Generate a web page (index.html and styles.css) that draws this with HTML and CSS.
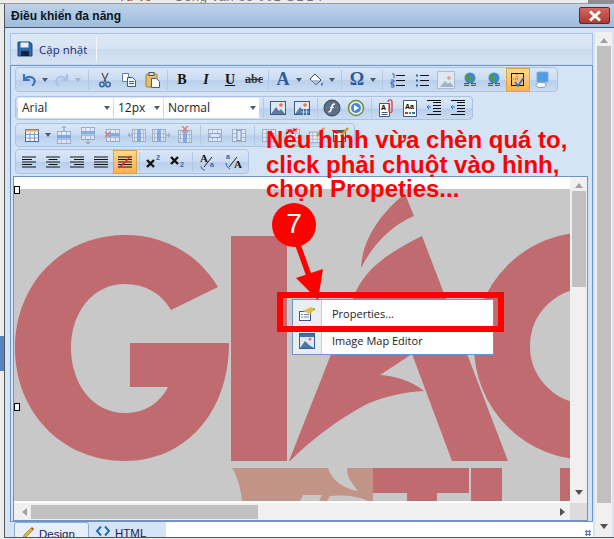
FILE: index.html
```html
<!DOCTYPE html>
<html lang="vi">
<head>
    <meta charset="UTF-8">
    <title>Điều khiển đa năng</title>
    <link rel="stylesheet" href="styles.css">
</head>
<body>
<svg class="defs" width="0" height="0">
    <symbol id="tbl" viewBox="0 0 16 16"><rect x="1.500" y="2.500" width="13" height="12" fill="#e6edf6" stroke="#8d9db5"/><path d="M1.500 6.500h13M1.500 10.500h13M5.500 2.500v12M10.500 2.500v12" stroke="#a7b3c6" fill="none"/></symbol>
    <symbol id="tblr" viewBox="0 0 16 16"><rect x="1.500" y="2.500" width="13" height="12" fill="#e6edf6" stroke="#8d9db5"/><path d="M1.500 10.500h13M5.500 2.500v12M10.500 2.500v12" stroke="#a7b3c6" fill="none"/><rect x="1" y="6" width="14" height="3.500" fill="#6f9cdc"/></symbol>
    <symbol id="tblc" viewBox="0 0 16 16"><rect x="1.500" y="2.500" width="13" height="12" fill="#e6edf6" stroke="#8d9db5"/><path d="M1.500 6.500h13M1.500 10.500h13M3.500 2.500v12M12.500 2.500v12" stroke="#a7b3c6" fill="none"/><rect x="6" y="2" width="4" height="13" fill="#6f9cdc"/></symbol>
    <symbol id="lines-l" viewBox="0 0 16 16"><path d="M1 3h14M1 5.500h10M1 8h14M1 10.500h10M1 13h14" stroke="#111" stroke-width="1.200" fill="none"/></symbol>
    <symbol id="lines-c" viewBox="0 0 16 16"><path d="M1 3h14M3.500 5.500h9M1 8h14M3.500 10.500h9M1 13h14" stroke="#111" stroke-width="1.200" fill="none"/></symbol>
    <symbol id="lines-r" viewBox="0 0 16 16"><path d="M1 3h14M5 5.500h10M1 8h14M5 10.500h10M1 13h14" stroke="#111" stroke-width="1.200" fill="none"/></symbol>
    <symbol id="lines-j" viewBox="0 0 16 16"><path d="M1 3h14M1 5.500h14M1 8h14M1 10.500h14M1 13h14" stroke="#111" stroke-width="1.200" fill="none"/></symbol>
    <symbol id="pic" viewBox="0 0 16 16"><rect x=".5" y="1.500" width="15" height="13" fill="#dfe8f3" stroke="#3f5a80"/><circle cx="11" cy="5" r="1.800" fill="#e8763a"/><path d="M1 14l5-7 3 4 2-2 4 5z" fill="#5b7ba3"/></symbol>
    <symbol id="globe" viewBox="0 0 16 16"><circle cx="8" cy="6" r="5.500" fill="#3f88d0"/><path d="M5 2l3 1-1 3 3 1-1 3-3-2-3-2z" fill="#4f9e3a"/><path d="M2 12.500h5M9 12.500h5" stroke="#333" stroke-width="2.400" fill="none"/><path d="M2 12.500h5M9 12.500h5" stroke="#ddd" stroke-width=".8" fill="none"/></symbol>
    <symbol id="indent" viewBox="0 0 16 16"><path d="M7 2.500h8M7 5.500h8M7 8.500h8M7 11.500h8M1 14.500h14M1 .5h14" stroke="#111" fill="none"/><path d="M1 7h4M3 5l-2 2 2 2" stroke="#2c6fc4" fill="none"/></symbol>
</svg>

<div class="page">
    <div class="behind-top"><span class="behind-red">Tư vc</span><span class="behind-grey">Công văn số 001 GDĐT</span></div>
    <div class="behind-corner"></div>
    <div class="behind-blue"></div>

    <div class="window">
        <div class="titlebar">
            <span class="title">Điều khiển đa năng</span>
            <div class="close"><svg width="16" height="12" viewBox="0 0 16 12"><path d="M3 1.500l10 9M13 1.500l-10 9" stroke="#fff" stroke-width="3"/></svg></div>
        </div>

        <div class="winbody">
            <div class="content">
                <div class="mainbar">
                    <div class="savebtn">
                        <svg width="16" height="16" viewBox="0 0 16 16"><path d="M1 1h12l2 2v12H1z" fill="#2f68ad" stroke="#1c4a84"/><rect x="3.500" y="1.500" width="8" height="5" fill="#e8eef6"/><rect x="4" y="10" width="8" height="5" fill="#10233f"/></svg>
                        <span>Cập nhật</span>
                    </div>
                    <div class="mainsep"></div>
                </div>

                <div class="frame">
                    <div class="toolbar tb1">
                        <div class="btn"><svg width="16" height="16" viewBox="0 0 16 16"><path d="M3 2v6h6M3.500 7.500C6 4 11 4 13 7c1.300 2 .5 5-2 6.500" stroke="#3b74bb" stroke-width="2.200" fill="none"/></svg></div><div class="caret"></div>
                        <div class="btn"><svg width="16" height="16" viewBox="0 0 16 16"><path d="M13 2v6H7M12.500 7.500C10 4 5 4 3 7c-1.300 2-.5 5 2 6.500" stroke="#a9c3e2" stroke-width="2.200" fill="none"/></svg></div><div class="caret faded"></div>
                        <div class="sep wide"></div>
                        <div class="btn"><svg width="16" height="16" viewBox="0 0 16 16"><path d="M5 1l4 9M11 1L7 10" stroke="#555" stroke-width="1.300"/><circle cx="5" cy="12.500" r="2.200" fill="none" stroke="#2f62b0" stroke-width="1.500"/><circle cx="11" cy="12.500" r="2.200" fill="none" stroke="#2f62b0" stroke-width="1.500"/></svg></div>
                        <div class="btn"><svg width="16" height="16" viewBox="0 0 16 16"><path d="M1.500 1.500h6v8h-6z" fill="#fff" stroke="#5f7ea6"/><path d="M6.500 5.500h5l3 3v6h-8z" fill="#f6f9fd" stroke="#2f5f9e"/><path d="M8 9.500h5M8 11.500h5" stroke="#2f5f9e"/></svg></div>
                        <div class="btn"><svg width="16" height="16" viewBox="0 0 16 16"><rect x="1" y="2" width="11" height="13" rx="1" fill="#e7bd6c" stroke="#a87f32"/><rect x="4" y="0.500" width="5" height="3" fill="#ddd" stroke="#555"/><path d="M6.500 6.500h5l3 3v6h-8z" fill="#fff" stroke="#4b5d78"/></svg></div>
                        <div class="sep small"></div>
                        <div class="btn bold-b">B</div>
                        <div class="btn ital-i">I</div>
                        <div class="btn under-u">U</div>
                        <div class="btn strike">abc</div>
                        <div class="sep small"></div>
                        <div class="btn big-a">A</div><div class="caret"></div>
                        <div class="btn"><svg width="16" height="16" viewBox="0 0 16 16"><path d="M7 2l6 6-5 5-6-6z" fill="#fff" stroke="#444"/><path d="M3 8h9l-4 5z" fill="#a7bddb"/><path d="M14 10c1 2 1.500 3 0 4-1.500-1-1-2 0-4z" fill="#3b74bb"/></svg></div><div class="caret"></div>
                        <div class="sep"></div>
                        <div class="btn omega">Ω</div><div class="caret"></div>
                        <div class="sep"></div>
                        <div class="btn"><svg width="16" height="16" viewBox="0 0 16 16"><path d="M6 3.500h9M6 8.500h9M6 13.500h9" stroke="#111" fill="none"/><path d="M2 2h2v4M1 8h3v2H1v2h3M1 13h3v2H1" stroke="#2f62b0" fill="none"/></svg></div>
                        <div class="btn"><svg width="16" height="16" viewBox="0 0 16 16"><path d="M6 3.500h9M6 8.500h9M6 13.500h9" stroke="#111" fill="none"/><path d="M2 2.500h2v2H2zM2 7.500h2v2H2zM2 12.500h2v2H2z" fill="#2f62b0"/></svg></div>
                        <div class="btn"><svg width="18" height="18" viewBox="0 0 18 18"><rect x=".5" y=".5" width="17" height="17" fill="#dfe7f1" stroke="#8897ad" stroke-dasharray="1 1"/><circle cx="12" cy="7" r="1.800" fill="#e59a7c"/><path d="M3 16l5-6 3 3 2-2 4 5z" fill="#9fb2ca"/></svg></div>
                        <div class="btn"><svg width="16" height="16"><use href="#globe"/></svg></div>
                        <div class="btn"><svg width="16" height="16"><use href="#globe"/></svg></div>
                        <div class="btn on"><svg width="18" height="18" viewBox="0 0 18 18"><rect x="2.500" y="2.500" width="12" height="12" fill="none" stroke="#111"/><path d="M2 8h8M8 3v6" stroke="#c0503a" stroke-dasharray="1 1"/><path d="M6 11l3 4 6-9" stroke="#2f74c9" stroke-width="1.600" fill="none"/></svg></div>
                        <div class="btn"><svg width="16" height="18" viewBox="0 0 16 18"><rect x="3" y="1" width="11" height="10" rx="1" fill="#4e9be6" stroke="#8fa8c8"/><ellipse cx="7" cy="14" rx="5" ry="2.500" fill="#f5f7fa" stroke="#8d9db5"/></svg></div>
                    </div>

                    <div class="toolbar tb2">
                        <div class="select sel-font">Arial</div>
                        <div class="select sel-size">12px</div>
                        <div class="select sel-style">Normal</div>
                        <div class="sep"></div>
                        <div class="btn"><svg width="16" height="16"><use href="#pic"/></svg></div>
                        <div class="btn"><svg width="16" height="16" viewBox="0 0 16 16"><use href="#pic"/><path d="M7 9h8v6H7z" fill="#3f70ad"/><path d="M9.500 9v6M12.500 9v6M7 12h8" stroke="#fff" stroke-width=".6"/></svg></div>
                        <div class="sep"></div>
                        <div class="btn"><svg width="18" height="18" viewBox="0 0 18 18"><circle cx="9" cy="9" r="8" fill="#5d6f86" stroke="#33445a"/><path d="M12 5c-3-.5-3 2-3.500 4S8 13 5.500 13" stroke="#fff" stroke-width="1.500" fill="none"/><path d="M7 8.500h4" stroke="#fff"/></svg></div>
                        <div class="btn"><svg width="18" height="18" viewBox="0 0 18 18"><circle cx="9" cy="9" r="7.500" fill="#eaf1f7" stroke="#6f8f3e" stroke-width="1.600"/><circle cx="9" cy="9" r="5" fill="#4b86cf"/><path d="M7 6l5 3-5 3z" fill="#fff"/></svg></div>
                        <div class="sep"></div>
                        <div class="btn"><svg width="16" height="18" viewBox="0 0 16 18"><path d="M1.500 4.500h10v13h-10z" fill="#fff" stroke="#3f5a80"/><path d="M3.500 13.500h6M3.500 15.500h6" stroke="#3f5a80"/><text x="3" y="11" class="ico-text">A</text><path d="M10 3c0-3 4-3 4 0v9c0 2-3 2-3 0V4" fill="none" stroke="#d0342c" stroke-width="1.200"/></svg></div>
                        <div class="btn"><svg width="16" height="18" viewBox="0 0 16 18"><path d="M1.500 1.500h13v16h-13z" fill="#fff" stroke="#3f5a80"/><text x="3" y="10" class="ico-text">Aa</text><path d="M3 14h3" stroke="#c33" stroke-width="2"/><path d="M7 14h2" stroke="#396" stroke-width="2"/><path d="M10 14h3" stroke="#36a" stroke-width="2"/></svg></div>
                        <div class="btn"><svg width="16" height="16"><use href="#indent"/></svg></div>
                        <div class="btn"><svg width="16" height="16"><use href="#indent"/></svg></div>
                    </div>

                    <div class="toolbar tb3">
                        <div class="btn"><svg width="16" height="16" viewBox="0 0 16 16"><rect x="1.500" y="2.500" width="13" height="12" fill="#f5f8fc" stroke="#3f6aa6"/><path d="M1.500 3.500h13" stroke="#e8a64a" stroke-width="2"/><path d="M1.500 7.500h13M1.500 11h13M6 5v9M10.500 5v9" stroke="#7b99c4" fill="none"/></svg></div><div class="caret"></div>
                        <div class="btn dim"><svg width="18" height="18" viewBox="0 0 18 18"><use href="#tblr" y="3" width="16" height="16"/><path d="M8 0v5M6 2l2-2 2 2" stroke="#7f8ea5" fill="none"/></svg></div>
                        <div class="btn dim"><svg width="18" height="18" viewBox="0 0 18 18"><use href="#tblr" y="-1" width="16" height="16"/><path d="M8 13v5M6 16l2 2 2-2" stroke="#7f8ea5" fill="none"/></svg></div>
                        <div class="btn dim"><svg width="16" height="16" viewBox="0 0 16 16"><use href="#tblr"/><path d="M0 5l5 5M5 5l-5 5" stroke="#e0605c" stroke-width="1.600"/></svg></div>
                        <div class="btn dim"><svg width="18" height="16" viewBox="0 0 18 16"><use href="#tblc" x="3" width="16" height="16"/><path d="M0 8h5M2 6L0 8l2 2" stroke="#7f8ea5" fill="none"/></svg></div>
                        <div class="btn dim"><svg width="18" height="16" viewBox="0 0 18 16"><use href="#tblc" x="-1" width="16" height="16"/><path d="M13 8h5M16 6l2 2-2 2" stroke="#7f8ea5" fill="none"/></svg></div>
                        <div class="btn dim"><svg width="16" height="18" viewBox="0 0 16 18"><use href="#tblc" y="2" width="16" height="16"/><path d="M5 0l6 6M11 0L5 6" stroke="#e0605c" stroke-width="1.600"/></svg></div>
                        <div class="sep"></div>
                        <div class="btn dim"><svg width="16" height="16" viewBox="0 0 16 16"><use href="#tbl"/><rect x="3" y="6.500" width="10" height="4" fill="#e6edf6" stroke="#6f8fc0"/></svg></div>
                        <div class="btn dim"><svg width="16" height="16" viewBox="0 0 16 16"><use href="#tbl"/><rect x="6" y="3.500" width="4" height="10" fill="#e6edf6" stroke="#6f8fc0"/></svg></div>
                        <div class="sep"></div>
                        <div class="btn dim"><svg width="16" height="16"><use href="#tbl"/></svg></div>
                        <div class="btn dim"><svg width="16" height="16" viewBox="0 0 16 16"><use href="#tbl"/><path d="M8 1l4 4M12 1L8 5" stroke="#d9534f" stroke-width="1.500"/></svg></div>
                        <div class="btn"><svg width="18" height="18" viewBox="0 0 18 18"><use href="#tbl" width="14" height="14" y="4"/><path d="M9 10l7-8" stroke="#d69b2e" stroke-width="2.500"/></svg></div>
                        <div class="btn"><svg width="18" height="18" viewBox="0 0 18 18"><rect x="1.500" y="4.500" width="12" height="11" fill="#fff" stroke="#36537f"/><path d="M1.500 6h12" stroke="#c33" stroke-width="2"/><path d="M9 10l7-8" stroke="#d69b2e" stroke-width="2.500"/></svg></div>
                    </div>

                    <div class="toolbar tb4">
                        <div class="btn"><svg width="16" height="16"><use href="#lines-l"/></svg></div>
                        <div class="btn"><svg width="16" height="16"><use href="#lines-c"/></svg></div>
                        <div class="btn"><svg width="16" height="16"><use href="#lines-r"/></svg></div>
                        <div class="btn"><svg width="16" height="16"><use href="#lines-j"/></svg></div>
                        <div class="btn on"><svg width="16" height="16" viewBox="0 0 16 16"><use href="#lines-j"/><path d="M2 14L14 2" stroke="#e0281c" stroke-width="1.400"/></svg></div>
                        <div class="sep tiny"></div>
                        <div class="btn"><svg width="18" height="16" viewBox="0 0 18 16"><path d="M3 6l7 7M10 6l-7 7" stroke="#111" stroke-width="2.400"/><text x="12" y="6" class="ico-small">2</text></svg></div>
                        <div class="btn"><svg width="18" height="16" viewBox="0 0 18 16"><path d="M3 3l7 7M10 3l-7 7" stroke="#111" stroke-width="2.400"/><text x="12" y="13" class="ico-small">2</text></svg></div>
                        <div class="sep"></div>
                        <div class="btn"><svg width="18" height="20" viewBox="0 0 18 20"><text x="1" y="10" class="ico-serif">A</text><path d="M5 15L13 5" stroke="#222"/><text x="11" y="15" class="ico-small">a</text><path d="M2 14c0 3 2 4 4 4" stroke="#2f62b0" fill="none"/></svg></div>
                        <div class="btn case-last"><svg width="18" height="20" viewBox="0 0 18 20"><text x="1" y="7" class="ico-small">a</text><text x="9" y="16" class="ico-serif">A</text><path d="M4 15L12 5" stroke="#222"/><path d="M1 11c0 3 2 5 4 6" stroke="#2f62b0" fill="none"/></svg></div>
                    </div>

                    <div class="editor">
                        <div class="canvas">
                            <div class="img-top"></div>
                            <svg class="logo" width="558" height="312" viewBox="14 188 558 312">
                                <rect x="14" y="188" width="558" height="312" fill="#c8c8c8"/>
                                <path d="M232 467H328C332 480 345 488 358 490C350 480 347 475 347 467H373V500H368C355 494 340 494 330 495L327 500H319L322 494H303L300 500H242C241 488 238 477 232 467Z" fill="#c29488"/>
                                <g fill="#bf6b6f">
                                    <path d="M218 286C198 253 165 234 125 234C62 234 15 283 15 347C15 411 62 460 125 460C185 460 229 412 229 342L130 342L130 386L168 386C160 402 145 412 125 412C93 412 71 383 71 347C71 311 93 283 125 283C145 283 161 292 171 309Z"/>
                                    <rect x="231" y="235" width="56" height="225"/>
                                    <path d="M422 235L508 460L452 460L412 353L380 374C395 375 412 380 424 390C405 391 385 395 367 403C335 420 310 440 290 460L289 460L356 290C368 265 392 250 422 235Z"/>
                                    <path d="M405 193C408 200 411 208 414 215C390 225 372 245 361 267C362 240 380 212 405 193Z"/>
                                    <circle cx="588" cy="345" r="86" fill="none" stroke="#bf6b6f" stroke-width="56"/>
                                    <path d="M373 467H469V492H437V500H407V492H373Z"/>
                                    <rect x="471" y="467" width="31" height="33"/>
                                    <rect x="560" y="467" width="12" height="33"/>
                                </g>
                            </svg>
                            <span class="handle h1"></span>
                            <span class="handle h2"></span>
                        </div>
                        <div class="vscroll inner"><i class="up"></i><b class="thumb"></b><i class="down"></i></div>
                        <div class="hscroll"><i class="left"></i><b class="hthumb"></b><i class="right"></i></div>
                        <div class="corner"></div>
                    </div>
                </div>

                <div class="tabsrow">
                    <div class="tabs">
                        <div class="tab active"><svg width="14" height="14" viewBox="0 0 14 14"><path d="M2 12l1-3 7-7 2 2-7 7z" fill="#e8b33c" stroke="#8a6a20" stroke-width=".6"/><path d="M10 2l2 2 1-1-2-2z" fill="#c33"/></svg>Design</div>
                        <div class="tab"><svg width="16" height="12" viewBox="0 0 16 12"><path d="M6 1.500L2 6l4 4.500M10 1.500L14 6l-4 4.500" stroke="#1f6fb5" stroke-width="2" fill="none"/></svg>HTML</div>
                    </div>
                    <div class="dots"></div>
                </div>
            </div>

            <div class="vscroll outer"><i class="up"></i><b class="thumb"></b><i class="down"></i></div>
        </div>
    </div>

    <div class="note">Nếu hình vừa chèn quá to,<br>click phải chuột vào hình,<br>chọn Propeties...</div>

    <div class="menu">
        <div class="menu-item">
            <div class="menu-ico"><svg width="18" height="16" viewBox="0 0 18 16"><rect x="1.500" y="5.500" width="11" height="9" fill="#f5f8fc" stroke="#3f5a80"/><path d="M3 8.500h2M6 8.500h5M3 11h2M6 11h5" stroke="#6d86a8"/><path d="M5 5l8-4 4 2-5 5z" fill="#e3b94a"/><path d="M15 2l2 1-1 2z" fill="#4aa03c"/></svg></div>
            <span>Properties...</span>
        </div>
        <div class="menu-item">
            <div class="menu-ico"><svg width="16" height="16" viewBox="0 0 16 16"><rect x=".5" y=".5" width="15" height="15" fill="#dfe8f3" stroke="#2f5f9e"/><rect x="1" y="1" width="14" height="3" fill="#3f70ad"/><circle cx="11" cy="6" r="1.500" fill="#e8763a"/><path d="M1 15l5-7 4 4 5 3z" fill="#4b74a8"/></svg></div>
            <span>Image Map Editor</span>
        </div>
    </div>

    <div class="redbox"></div>
    <div class="badge">7</div>
    <svg class="arrow" width="40" height="64" viewBox="290 240 40 64"><path d="M298 245L312 284" stroke="#f00" stroke-width="5.500"/><path d="M318 300L296 278L323 269Z" fill="#f00"/></svg>
</div>
</body>
</html>
```

FILE: styles.css
```css
*{
    margin:0px;
    padding:0px;
    box-sizing:border-box;
}
body{
    font-family:"Open Sans", "Liberation Sans", sans-serif;
    font-size:12px;
    background-color:#f0f0f0;
    overflow:hidden;
}
.defs{
    position:absolute;
}
.page{
    position:relative;
    width:614px;
    height:539px;
    overflow:hidden;
    background-color:#ececec;
}

/* page behind the dialog */
.behind-top{
    position:absolute;
    left:0;
    top:0;
    width:590px;
    height:4px;
    overflow:hidden;
    border-bottom:1px solid #9c9c9c;
    font-family:"Liberation Sans", sans-serif;
    font-size:13px;
    line-height:4px;
}
.behind-red{
    position:absolute;
    left:118px;
    top:-5px;
    color:#b5533c;
}
.behind-grey{
    position:absolute;
    left:174px;
    top:-5px;
    color:#777;
    letter-spacing:.6px;
}
.behind-corner{
    position:absolute;
    right:0;
    top:0;
    width:26px;
    height:4px;
    background-color:#8f8f8f;
}
.behind-blue{
    position:absolute;
    left:0;
    top:336px;
    width:4px;
    height:35px;
    background-color:#5585c0;
}

/* dialog */
.window{
    position:absolute;
    left:4px;
    top:4px;
    width:610px;
    height:534px;
    display:flex;
    flex-direction:column;
    background-color:#d5e4f4;
    border-left:1px solid #555;
    border-bottom:1px solid #555;
}
.titlebar{
    height:24px;
    flex:none;
    display:flex;
    align-items:center;
    justify-content:space-between;
    padding:0 4px 0 6px;
    background:linear-gradient(#bed2e9, #9fbcdc);
    border-bottom:1px solid #4a5665;
}
.title{
    font-family:"Liberation Sans", sans-serif;
    font-size:12px;
    font-weight:bold;
    color:#0c1420;
}
.close{
    width:31px;
    height:17px;
    display:flex;
    align-items:center;
    justify-content:center;
    background:linear-gradient(#d6685e, #a93a33);
    border:1px solid #6d2226;
    border-radius:2px;
}
.winbody{
    flex:1;
    display:flex;
    min-height:0;
    padding:5px 0 0 5px;
}
.content{
    width:583px;
    display:flex;
    flex-direction:column;
}
.mainbar{
    height:32px;
    flex:none;
    display:flex;
    align-items:center;
    background:linear-gradient(#dde8f5 0, #d7e4f3 50%, #c9daee 50%, #d6e3f2 100%);
    border:1px solid #aac3e2;
    border-bottom-color:#c6d8ee;
}
.savebtn{
    display:flex;
    align-items:center;
    gap:6px;
    padding-left:6px;
    font-size:11.5px;
    color:#1b2a78;
}
.mainsep{
    width:1px;
    height:24px;
    margin-left:9px;
    background-color:#f3f7fc;
}
.frame{
    flex:1;
    min-height:0;
    display:flex;
    flex-direction:column;
    padding:1px 4px 0 2px;
    border:1px solid #6f93c6;
}
.toolbar{
    display:flex;
    align-items:center;
    height:25px;
    flex:none;
    margin-left:2px;
    padding-left:1px;
    border:1px solid #a9c3e4;
    border-radius:4px;
    background:linear-gradient(#dbe7f7 0, #cbdcf2 50%, #b8cfec 55%, #cbdcf2 100%);
}
.tb1{
    width:543px;
}
.tb2{
    width:458px;
    height:24px;
    margin-top:4px;
    padding-left:2px;
}
.tb3{
    width:340px;
    height:24px;
    margin-top:3px;
    padding-left:4px;
}
.tb4{
    width:234px;
    margin-top:2px;
}
.btn{
    width:24px;
    height:24px;
    flex:none;
    display:flex;
    align-items:center;
    justify-content:center;
}
.btn.on{
    background:linear-gradient(#ffd88f, #fdb04e);
    border:1px solid #d8a24a;
}
.btn.dim{
    opacity:.75;
}
.case-last{
    margin-left:2px;
}
.caret{
    width:9px;
    height:24px;
    flex:none;
    position:relative;
}
.caret::after{
    content:"";
    position:absolute;
    left:1px;
    top:10px;
    border:3px solid transparent;
    border-top:4px solid #4b5a70;
}
.caret.faded::after{
    border-top-color:#a2b4ca;
}
.sep{
    width:8px;
    height:20px;
    flex:none;
    background:linear-gradient(#b3c8e2, #b3c8e2) center/1px 100% no-repeat;
}
.sep.wide{
    width:10px;
}
.sep.small{
    width:5px;
}
.sep.tiny{
    width:4px;
}
.tb2 .sep,.tb3 .sep{
    width:6px;
}
.tb4 .sep:not(.tiny){
    width:7px;
}
.bold-b,.ital-i,.under-u,.strike,.big-a,.omega{
    font-family:"Liberation Serif", serif;
    font-weight:bold;
    color:#111;
}
.bold-b{
    font-size:14px;
}
.ital-i{
    font-size:14px;
    font-style:italic;
}
.under-u{
    font-size:14px;
    text-decoration:underline;
}
.strike{
    font-size:12px;
    text-decoration:line-through;
    color:#333;
}
.big-a,.omega{
    font-size:18px;
    color:#2c5a9c;
}
.ico-text{
    font-family:"Liberation Sans", sans-serif;
    font-size:7px;
    font-weight:bold;
}
.ico-small{
    font-family:"Liberation Sans", sans-serif;
    font-size:7px;
    font-weight:bold;
    fill:#2f62b0;
}
.ico-serif{
    font-family:"Liberation Serif", serif;
    font-size:11px;
    font-weight:bold;
    fill:#111;
}
.select{
    height:20px;
    flex:none;
    margin-right:1px;
    padding-left:4px;
    line-height:20px;
    font-size:12px;
    color:#222;
    background-color:#fff;
    position:relative;
}
.select::after{
    content:"";
    position:absolute;
    right:3px;
    top:8px;
    border:3px solid transparent;
    border-top:4px solid #4b5a70;
}
.sel-font{
    width:95px;
}
.sel-size{
    width:49px;
}
.sel-style{
    width:95px;
}

/* editor */
.editor{
    flex:1;
    min-height:0;
    margin-top:2px;
    display:grid;
    grid-template-columns:1fr 17px;
    grid-template-rows:1fr 17px;
    border:1px solid #6f93c6;
    background-color:#fff;
}
.canvas{
    position:relative;
    overflow:hidden;
    display:flex;
    flex-direction:column;
}
.img-top{
    height:12px;
    flex:none;
    background-color:#fff;
}
.logo{
    display:block;
    flex:none;
}
.handle{
    position:absolute;
    left:0;
    width:6px;
    height:8px;
    background-color:#fff;
    border:1px solid #000;
}
.h1{
    top:9px;
}
.h2{
    top:226px;
}
.vscroll{
    display:flex;
    flex-direction:column;
    align-items:center;
    background-color:#f0f0f0;
}
.vscroll .thumb{
    width:14px;
    background-color:#c0c0c0;
}
.vscroll .up,.vscroll .down{
    flex:none;
    border:4px solid transparent;
}
.vscroll .up{
    border-bottom:5px solid #a0a0a0;
    margin-top:2px;
    margin-bottom:3px;
}
.vscroll .down{
    border-top:5px solid #505050;
    margin-top:auto;
    margin-bottom:4px;
}
.vscroll.inner .thumb{
    height:96px;
}
.vscroll.outer{
    width:17px;
    margin-left:2px;
    margin-top:-1px;
}
.vscroll.outer .thumb{
    height:457px;
}
.hscroll{
    display:flex;
    align-items:center;
    padding-left:2px;
    background-color:#f0f0f0;
}
.hscroll .hthumb{
    width:227px;
    height:14px;
    margin-left:4px;
    background-color:#c0c0c0;
}
.hscroll .left,.hscroll .right{
    flex:none;
    border:4px solid transparent;
}
.hscroll .left{
    border-right:5px solid #a0a0a0;
    margin-left:2px;
}
.hscroll .right{
    border-left:5px solid #505050;
    margin-left:auto;
    margin-right:1px;
}
.corner{
    background-color:#dcdcdc;
}
.tabsrow{
    height:15px;
    flex:none;
    display:flex;
    justify-content:space-between;
    background-color:#fff;
    overflow:hidden;
}
.tabs{
    display:flex;
    width:156px;
    padding-left:4px;
    background-color:#d5e4f4;
}
.tab{
    display:flex;
    align-items:flex-start;
    gap:4px;
    padding:3px 0 0 6px;
    width:75px;
    height:20px;
    line-height:17px;
    font-family:"Liberation Sans", sans-serif;
    font-size:11.5px;
    color:#1a1a5c;
}
.tab.active{
    background-color:#e6f0fa;
    border:1px solid #8eaed6;
    border-radius:3px 3px 0 0;
}
.dots{
    width:6px;
    height:6px;
    margin:8px 2px 0 0;
    background:radial-gradient(circle, #5b7db5 1px, transparent 1.5px) 0 0/3px 3px;
}

/* annotation over the screenshot */
.note{
    position:absolute;
    left:266px;
    top:128px;
    font-family:"Liberation Sans", sans-serif;
    font-size:24px;
    line-height:24.5px;
    font-weight:bold;
    color:#f00;
    white-space:nowrap;
}
.menu{
    position:absolute;
    left:292px;
    top:299px;
    width:202px;
    height:56px;
    background-color:#fff;
    border:1px solid #6f93c6;
}
.menu-item{
    display:flex;
    align-items:center;
    gap:10px;
    height:27px;
    font-size:11px;
    color:#222;
}
.menu-ico{
    width:29px;
    height:100%;
    display:flex;
    align-items:center;
    justify-content:center;
    background-color:#e9eef0;
    border-right:1px solid #c6ccd2;
}
.redbox{
    position:absolute;
    left:277px;
    top:292px;
    width:227px;
    height:40px;
    border:6px solid #f00;
}
.badge{
    position:absolute;
    left:272px;
    top:203px;
    width:44px;
    height:44px;
    border-radius:50%;
    background-color:#f00;
    color:#fff;
    font-family:"Liberation Sans", sans-serif;
    font-size:28px;
    line-height:42px;
    text-align:center;
}
.arrow{
    position:absolute;
    left:290px;
    top:240px;
}
```
